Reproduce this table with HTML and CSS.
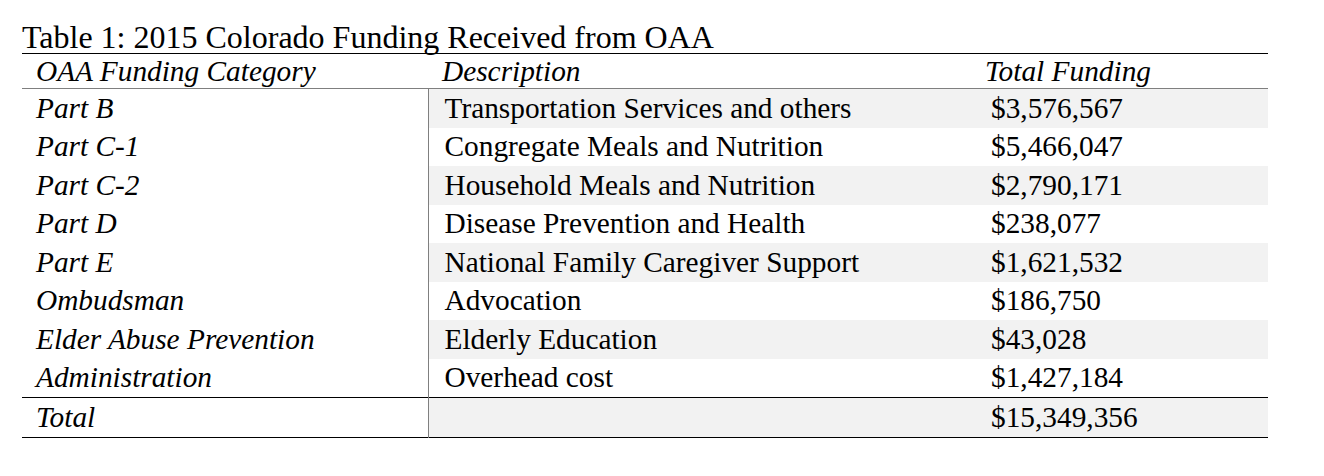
FILE: index.html
```html
<!DOCTYPE html>
<html>
<head>
<meta charset="utf-8">
<link rel="stylesheet" href="styles.css">
</head>
<body>
<div class="page">
  <div class="caption">Table 1: 2015 Colorado Funding Received from OAA</div>
  <table class="funding">
    <colgroup>
      <col class="c1"><col class="c2"><col class="c3">
    </colgroup>
    <thead>
      <tr class="head">
        <th class="cat">OAA Funding Category</th>
        <th class="desc">Description</th>
        <th class="amt">Total Funding</th>
      </tr>
    </thead>
    <tbody>
      <tr class="shade"><td class="cat">Part B</td><td class="desc">Transportation Services and others</td><td class="amt">$3,576,567</td></tr>
      <tr><td class="cat">Part C-1</td><td class="desc">Congregate Meals and Nutrition</td><td class="amt">$5,466,047</td></tr>
      <tr class="shade"><td class="cat">Part C-2</td><td class="desc">Household Meals and Nutrition</td><td class="amt">$2,790,171</td></tr>
      <tr><td class="cat">Part D</td><td class="desc">Disease Prevention and Health</td><td class="amt">$238,077</td></tr>
      <tr class="shade"><td class="cat">Part E</td><td class="desc">National Family Caregiver Support</td><td class="amt">$1,621,532</td></tr>
      <tr><td class="cat">Ombudsman</td><td class="desc">Advocation</td><td class="amt">$186,750</td></tr>
      <tr class="shade"><td class="cat">Elder Abuse Prevention</td><td class="desc">Elderly Education</td><td class="amt">$43,028</td></tr>
      <tr><td class="cat">Administration</td><td class="desc">Overhead cost</td><td class="amt">$1,427,184</td></tr>
    </tbody>
    <tfoot>
      <tr class="shade total"><td class="cat">Total</td><td class="desc"></td><td class="amt">$15,349,356</td></tr>
    </tfoot>
  </table>
</div>
</body>
</html>
```
FILE: styles.css
```css
html, body {
  margin: 0;
  padding: 0;
  background: #ffffff;
}
.page {
  padding: 20px 0 0 22px;
  font-family: "Liberation Serif", "Times New Roman", serif;
  color: #000000;
}
.caption {
  font-size: 32px;
  line-height: 34px;
  height: 33px;
  white-space: nowrap;
}
.funding {
  border-collapse: collapse;
  width: 1246px;
  table-layout: fixed;
  border-top: 1px solid #000;
  border-bottom: 1px solid #000;
  font-size: 29.33px;
  line-height: 33px;
}
.c1 { width: 406px; }
.c2 { width: 547px; }
.c3 { width: 293px; }
.funding th,
.funding td {
  padding: 0;
  text-align: left;
  white-space: nowrap;
  vertical-align: middle;
}
.head th {
  font-weight: normal;
  font-style: italic;
  height: 34px;
  border-bottom: 1px solid #7f7f7f;
}
.head th.cat { padding-left: 14px; }
.head th.desc { padding-left: 14px; }
.head th.amt { padding-left: 10px; }
tbody td, tfoot td { height: 38.5px; }
td.cat {
  font-style: italic;
  padding-left: 14px;
  border-right: 1px solid #7f7f7f;
}
td.desc { padding-left: 16px; }
td.amt { padding-left: 16px; }
.shade td.desc, .shade td.amt { background: #f2f2f2; }
.total td {
  border-top: 1px solid #000;
  height: 39px;
}
```
